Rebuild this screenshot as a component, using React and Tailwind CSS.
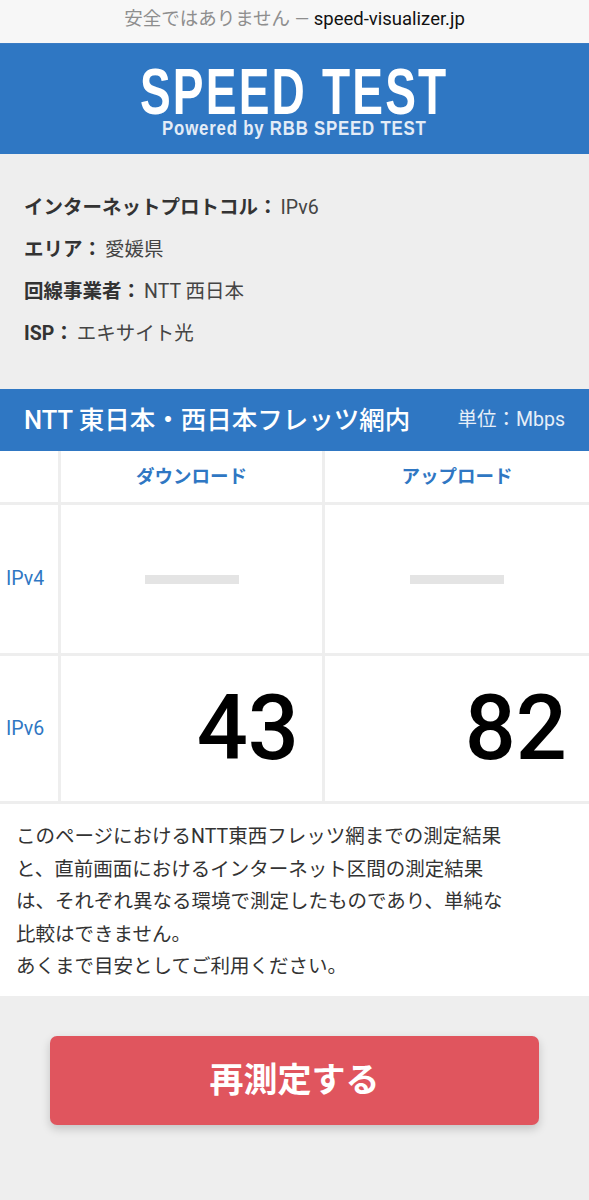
const info = [
  { label: 'インターネットプロトコル：', value: 'IPv6' },
  { label: 'エリア：', value: '愛媛県' },
  { label: '回線事業者：', value: 'NTT 西日本' },
  { label: 'ISP：', value: 'エキサイト光' },
];

const Dash = () => <div className="w-[94px] h-[9px] bg-[#e4e4e4]" />;

export default function App() {
  return (
    <div className="w-[589px] min-h-[1200px] bg-[#eeeeee] text-[#333] font-['Roboto','Noto_Sans_CJK_JP',sans-serif]">
      {/* address bar */}
      <div className="h-[44px] bg-[#f7f7f7] border-b border-[#3b7cc4] flex items-start justify-center pt-[6px] text-[18.5px] whitespace-pre">
        <span className="text-[#8e8e8e]">安全ではありません — </span>
        <span className="text-[#111]">speed-visualizer.jp</span>
      </div>

      {/* logo header */}
      <header className="h-[110px] bg-[#2f77c3] pt-[22px] flex flex-col items-center text-white font-['Liberation_Sans',sans-serif] font-bold">
        <div className="text-[64px] leading-[52px] tracking-[3px] scale-x-[0.72] whitespace-nowrap">SPEED TEST</div>
        <div className="text-[21px] leading-[19px] tracking-[1px] scale-x-[0.8] whitespace-nowrap text-[#e3ecf7]">Powered by RBB SPEED TEST</div>
      </header>

      {/* connection info */}
      <section className="px-[24px] pt-[33px] pb-[34px] flex flex-col">
        {info.map((row) => (
          <div key={row.label} className="h-[42px] flex items-center text-[19.5px]">
            <span className="font-bold text-[#333]">{row.label}</span>
            <span className="ml-[3px] text-[#444]">{row.value}</span>
          </div>
        ))}
      </section>

      {/* section title */}
      <div className="h-[62px] bg-[#2f77c3] px-[24px] flex items-center justify-between text-white">
        <h2 className="text-[25.5px] font-medium">NTT 東日本・西日本フレッツ網内</h2>
        <span className="text-[19.5px] text-[#e6eef8]">単位：Mbps</span>
      </div>

      {/* results table */}
      <div className="bg-[#eeeeee] grid grid-cols-[58px_261px_1fr] gap-[3px] pb-[3px]">
        <div className="bg-white h-[51px]" />
        <div className="bg-white h-[51px] flex items-center justify-center pt-[3px] text-[18.5px] font-bold text-[#2f77c3]">ダウンロード</div>
        <div className="bg-white h-[51px] flex items-center justify-center pt-[3px] text-[18.5px] font-bold text-[#2f77c3]">アップロード</div>

        <div className="bg-white h-[148px] flex items-center pl-[6px] text-[19.5px] text-[#2f77c3]">IPv4</div>
        <div className="bg-white h-[148px] flex items-center justify-center"><Dash /></div>
        <div className="bg-white h-[148px] flex items-center justify-center"><Dash /></div>

        <div className="bg-white h-[145px] flex items-center pl-[6px] text-[19.5px] text-[#2f77c3]">IPv6</div>
        <div className="bg-white h-[145px] flex items-center justify-end pr-[23px] text-[90px] font-medium leading-none text-black">43</div>
        <div className="bg-white h-[145px] flex items-center justify-end pr-[22px] text-[90px] font-medium leading-none text-black">82</div>
      </div>

      {/* note */}
      <section className="bg-white pl-[16px] pr-[73px] pt-[17px] pb-[12px] text-[19.5px] leading-[32.5px] text-[#333]">
        <p>このページにおけるNTT東西フレッツ網までの測定結果と、直前画面におけるインターネット区間の測定結果は、それぞれ異なる環境で測定したものであり、単純な比較はできません。</p>
        <p>あくまで目安としてご利用ください。</p>
      </section>

      {/* retry */}
      <div className="px-[50px] pt-[40px] pb-[76px]">
        <button className="w-full h-[89px] rounded-[7px] bg-[#e0555e] text-white text-[34px] font-bold shadow-[0_4px_10px_rgba(0,0,0,0.18)]">
          再測定する
        </button>
      </div>
    </div>
  );
}
